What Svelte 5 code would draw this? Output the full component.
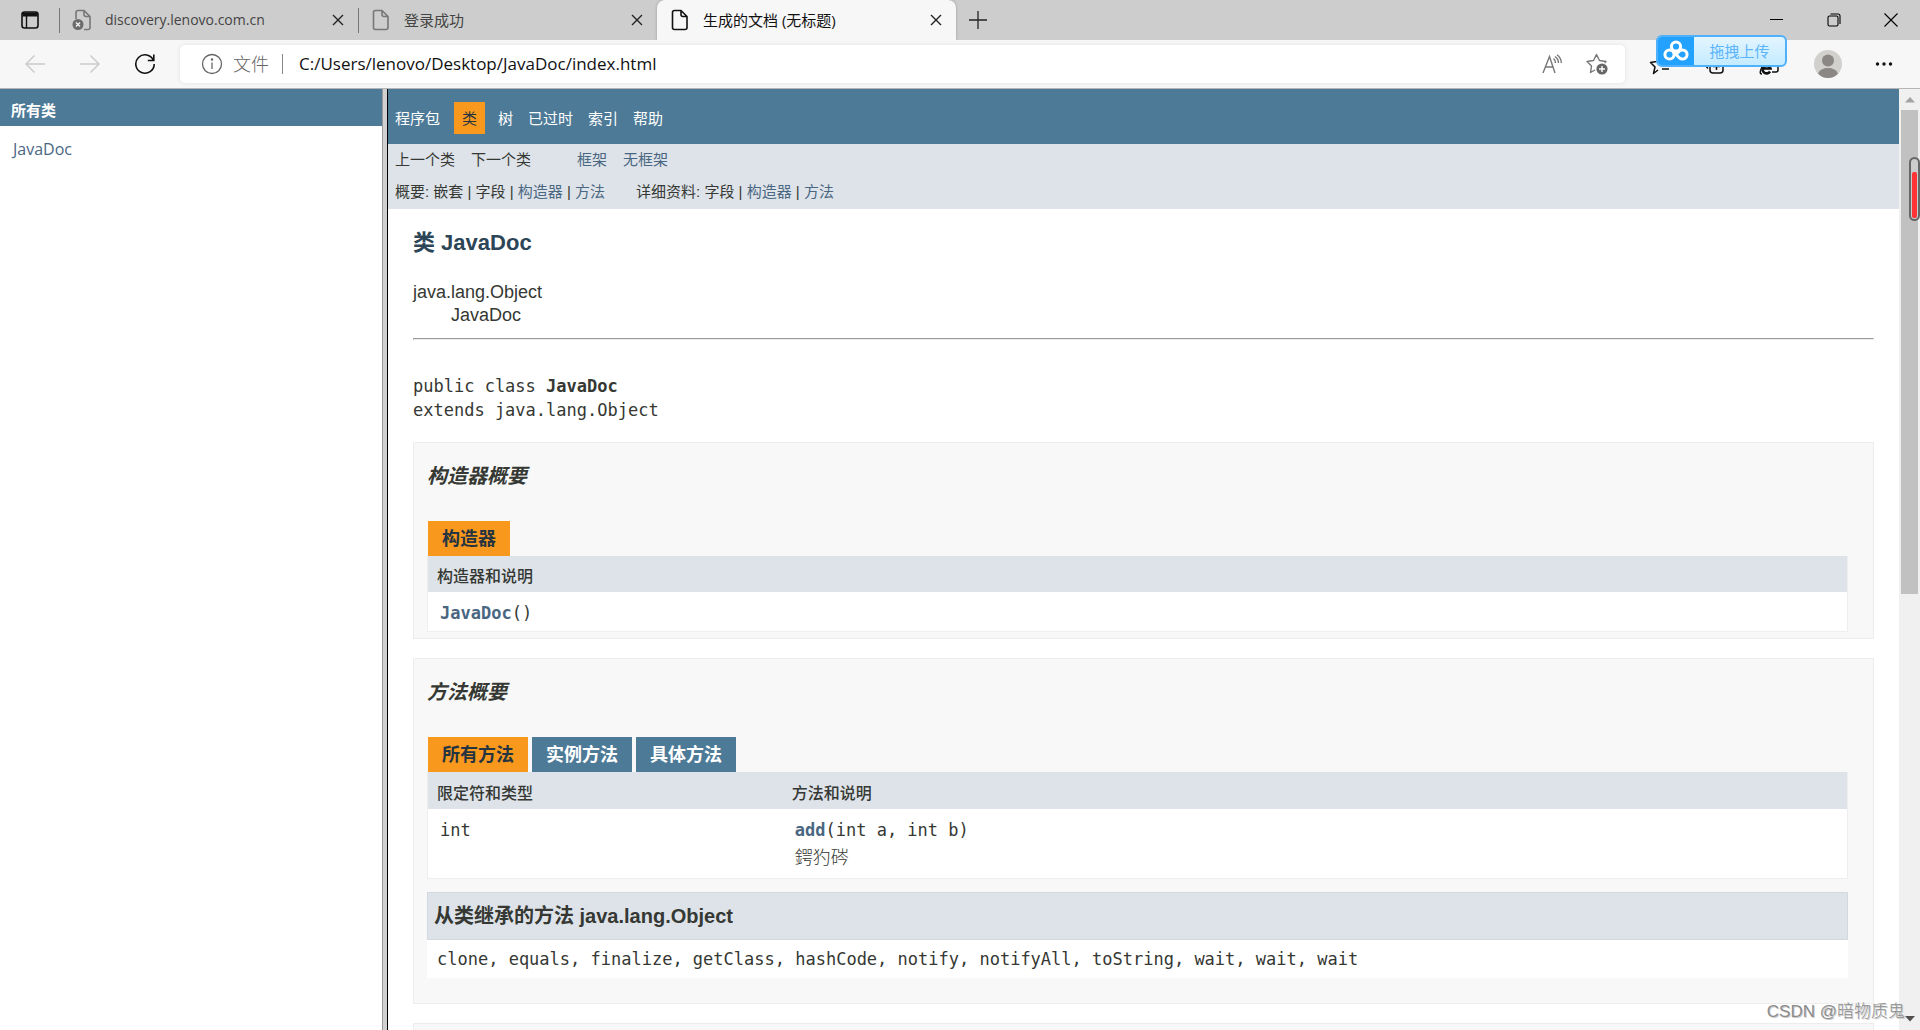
<script>
  const url = 'C:/Users/lenovo/Desktop/JavaDoc/index.html';
  const inherited = 'clone, equals, finalize, getClass, hashCode, notify, notifyAll, toString, wait, wait, wait';
  const methodTabs = ['所有方法', '实例方法', '具体方法'];
  let activeTab = $state(0);
</script>

{#snippet closeIcon()}
  <svg width="12" height="12" viewBox="0 0 12 12" stroke="#222" stroke-width="1.4" fill="none"><path d="M1 1l10 10M11 1l-10 10" /></svg>
{/snippet}

{#snippet pageIcon(color)}
  <svg class="page" width="20" height="22" viewBox="0 0 20 22" fill="none" stroke={color} stroke-width="1.6" stroke-linejoin="round">
    <path d="M4.500 1.500H11L17 7.500V18.500Q17 20.500 15 20.500H4.500Q2.500 20.500 2.500 18.500V3.500Q2.500 1.500 4.500 1.500zM11 1.500V5.500Q11 7.500 13 7.500H17" />
  </svg>
{/snippet}

<div class="window">
  <header class="tabs">
    <button class="menu" aria-label="标签页操作">
      <svg width="18" height="18" viewBox="0 0 18 18" fill="none" stroke="#111" stroke-width="1.6">
        <rect x="1" y="1" width="16" height="16" rx="2.500" /><path d="M1.500 3.500H16.500" stroke-width="4" /><path d="M5.500 4V17" stroke-width="1.400" />
      </svg>
    </button>
    <div class="tab first">
      <svg class="page" width="20" height="22" viewBox="0 0 20 22" fill="none" stroke="#777" stroke-width="1.600" stroke-linejoin="round">
        <path d="M4 10V3.500Q4 1.500 6 1.500H12L18 7.500V18.500Q18 20.500 16 20.500H12M12 1.500V5.500Q12 7.500 14 7.500H18" />
        <circle cx="6" cy="15.500" r="5.500" fill="#6b6b6b" stroke="none" /><path d="M4 13.500l4 4M8 13.500l-4 4" stroke="#eee" stroke-width="1.500" />
      </svg>
      <span class="name">discovery.lenovo.com.cn</span>
      <button aria-label="关闭">{@render closeIcon()}</button>
    </div>
    <div class="tab second">
      {@render pageIcon('#777')}
      <span class="name">登录成功</span>
      <button aria-label="关闭">{@render closeIcon()}</button>
    </div>
    <div class="tab active">
      {@render pageIcon('#111')}
      <span class="name">生成的文档 (无标题)</span>
      <button aria-label="关闭">{@render closeIcon()}</button>
    </div>
    <button class="plus" aria-label="新建标签页">
      <svg width="18" height="18" viewBox="0 0 18 18" stroke="#222" stroke-width="1.300"><path d="M9 0V18M0 9H18" /></svg>
    </button>
    <div class="controls">
      <button aria-label="最小化"><svg width="14" height="14" viewBox="0 0 14 14" stroke="#000"><path d="M0 6.500H13" /></svg></button>
      <button aria-label="还原"><svg width="14" height="14" viewBox="0 0 14 14" fill="none" stroke="#000" stroke-width="1.100"><rect x="1" y="3" width="10" height="10" rx="1.500" /><path d="M3.500 1H11Q13 1 13 3V11" /></svg></button>
      <button aria-label="关闭窗口"><svg width="14" height="14" viewBox="0 0 14 14" stroke="#000" stroke-width="1.100"><path d="M.5.5l13 13M13.500.5l-13 13" /></svg></button>
    </div>
  </header>

  <div class="toolbar">
    <div class="history">
      <button aria-label="后退"><svg width="20" height="20" viewBox="0 0 20 20" fill="none" stroke="#ccc" stroke-width="1.500"><path d="M20 10H1M9.500 1.500L1 10l8.500 8.500" /></svg></button>
      <button aria-label="前进"><svg width="20" height="20" viewBox="0 0 20 20" fill="none" stroke="#ccc" stroke-width="1.500"><path d="M0 10H19M10.500 1.500L19 10l-8.500 8.500" /></svg></button>
      <button aria-label="刷新"><svg width="22" height="22" viewBox="0 0 22 22" fill="none" stroke="#111" stroke-width="1.600"><path d="M19.500 7.500A9.200 9.200 0 1 0 20.200 11M19.800 1.500V7.500H13.800" /></svg></button>
    </div>
    <div class="address">
      <svg class="info" width="22" height="22" viewBox="0 0 22 22" fill="none" stroke="#666" stroke-width="1.300"><circle cx="11" cy="11" r="9.500" /><path d="M11 9.500V16" /><circle cx="11" cy="6.500" r=".6" fill="#666" /></svg>
      <label for="url">文件</label>
      <input id="url" type="text" value={url} />
      <button aria-label="大声朗读"><svg width="20" height="20" viewBox="0 0 20 20" fill="none" stroke="#777" stroke-width="1.400"><path d="M1 19L7.500 2.500L13 19M3 13H11M11.500 4.500Q13.500 6 13.500 9M13 2.500Q16.500 5 16.500 9M15 .8Q19.300 4 19.300 9" /></svg></button>
      <button aria-label="收藏"><svg width="22" height="22" viewBox="0 0 22 22" fill="none" stroke="#777" stroke-width="1.400" stroke-linejoin="round"><path d="M9 17L4.500 19.500L5.500 13L1 8.500L7.500 7.500L10.500 1.500L13.500 7.500L20 8.500L18.500 10" /><circle cx="16" cy="16" r="5.600" fill="#666" stroke="none" /><path d="M16 13V19M13 16H19" stroke="#fff" /></svg></button>
    </div>
    <div class="actions">
      <button aria-label="收藏夹"><svg width="22" height="22" viewBox="0 0 22 22" fill="none" stroke="#111" stroke-width="1.500" stroke-linejoin="round"><path d="M9 17L4.500 20.500L6 14L1.500 9.500L7.500 8.500L10 3L12.500 8.500L19 9.500M14 11H21M13 16H20" /></svg></button>
      <button aria-label="集锦"><svg width="22" height="22" viewBox="0 0 22 22" fill="none" stroke="#111" stroke-width="1.500"><rect x="6" y="7" width="13" height="13" rx="3" /><path d="M12.500 10V17M9 13.500H16M4 15.500Q1 13 2 8L4 3H14" /></svg></button>
      <button aria-label="IE 模式"><svg width="22" height="22" viewBox="0 0 22 22" fill="none" stroke="#111" stroke-width="1.500"><path d="M5 6V4Q5 2 7 2H17Q19 2 19 4V17Q19 19 17 19H13" /><path d="M11 18.500A4 4 0 1 1 11.500 15.500H4" stroke-width="2.600" /><path d="M3 21Q-.5 21 3 14" /></svg></button>
      <button aria-label="用户"><svg width="28" height="28" viewBox="0 0 28 28"><circle cx="14" cy="14" r="14" fill="#d2d0cd" /><circle cx="14" cy="10.500" r="6" fill="#8a8785" /><path d="M4 23.500Q6.500 18 14 18T24 23.500Q20 28 14 28T4 23.500z" fill="#8a8785" /></svg></button>
      <button aria-label="更多"><svg width="18" height="4" viewBox="0 0 18 4" fill="#111"><circle cx="2.500" cy="2" r="1.700" /><circle cx="9" cy="2" r="1.700" /><circle cx="15.500" cy="2" r="1.700" /></svg></button>
    </div>
    <button class="upload">
      <span class="cloud"><svg width="26" height="22" viewBox="0 0 26 22" fill="none" stroke="#fff" stroke-width="3"><circle cx="13" cy="6.500" r="4.600" /><circle cx="6.500" cy="14.500" r="4.600" /><path d="M10 11.500L16 17.500A4.600 4.600 0 1 0 16 11.500L13.500 14" /></svg></span>
      <span class="drag">拖拽上传</span>
    </button>
  </div>

  <div class="frames">
    <aside>
      <h1>所有类</h1>
      <a href="#javadoc">JavaDoc</a>
    </aside>
    <div class="splitter"></div>
    <main>
      <nav class="top">
        <a href="#package">程序包</a><a class="current" href="#class">类</a><a href="#tree">树</a><a href="#deprecated">已过时</a><a href="#index">索引</a><a href="#help">帮助</a>
      </nav>
      <div class="sub">
        <div class="line"><span>上一个类</span><span>下一个类</span><a class="frame" href="#frames">框架</a><a href="#noframes">无框架</a></div>
        <div class="line wide">
          <span>概要: 嵌套 | 字段 | <a href="#ctor">构造器</a> | <a href="#methods">方法</a></span>
          <span>详细资料: 字段 | <a href="#ctor">构造器</a> | <a href="#methods">方法</a></span>
        </div>
      </div>
      <article>
        <h2>类 JavaDoc</h2>
        <ul class="tree"><li>java.lang.Object<ul><li>JavaDoc</li></ul></li></ul>
        <hr />
        <pre>public class <b>JavaDoc</b>
extends java.lang.Object</pre>

        <section id="ctor">
          <h3>构造器概要</h3>
          <div class="captions"><span class="caption on">构造器</span></div>
          <table>
            <thead><tr><th>构造器和说明</th></tr></thead>
            <tbody><tr><td><code><a href="#ctor">JavaDoc</a>()</code></td></tr></tbody>
          </table>
        </section>

        <section id="methods" class="methods">
          <h3>方法概要</h3>
          <div class="captions">
            {#each methodTabs as name, i}
              <button class="caption" class:on={activeTab === i} onclick={() => (activeTab = i)}>{name}</button>
            {/each}
          </div>
          <table>
            <thead><tr><th class="type">限定符和类型</th><th>方法和说明</th></tr></thead>
            <tbody>
              <tr><td><code>int</code></td><td><code><a href="#add">add</a>(int a, int b)</code><div class="note">鍔犳硶</div></td></tr>
            </tbody>
          </table>
          <h4>从类继承的方法 java.lang.Object</h4>
          <code class="inherited">{inherited}</code>
        </section>

        <section></section>
      </article>
    </main>
    <div class="scrollbar">
      <svg width="10" height="6" viewBox="0 0 10 6" fill="#a3a3a3"><path d="M0 5.500L5 0l5 5.500z" /></svg>
      <div class="track"><div class="thumb"></div></div>
      <svg width="10" height="6" viewBox="0 0 10 6" fill="#505050"><path d="M0 0L5 5.500L10 0z" /></svg>
      <div class="gauge"><i></i></div>
    </div>
  </div>
  <div class="mark">CSDN @暗物质鬼</div>
</div>

<style>
  :global(body) { margin: 0; overflow: hidden; }
  * { box-sizing: border-box; }
  .window {
    position: relative; display: flex; flex-direction: column; height: 100vh; overflow: hidden;
    background: #fff; color: #353833; font: 15px/20px "Open Sans", "Noto Sans CJK SC", sans-serif;
  }
  button { border: 0; padding: 0; background: none; font: inherit; color: inherit; display: flex; align-items: center; justify-content: center; }
  svg { display: block; flex: none; }
  a { color: #4a6782; text-decoration: none; }

  .tabs { display: flex; height: 40px; flex: none; background: #cdcdcd; font-size: 14px; color: #444; }
  .menu { width: 59px; }
  .tab { display: flex; align-items: center; width: 299px; padding: 0 14px 0 13px; position: relative; }
  .tab .page { margin-right: 13px; }
  .tab .name { flex: 1; white-space: nowrap; }
  .tab.second .name, .tab.active .name { font-size: 15px; }
  .tab.first::before, .tab.second::before { content: ""; position: absolute; left: 0; top: 8px; width: 1px; height: 25px; background: #777; }
  .tab.active { background: #f7f7f7; color: #111; border-radius: 8px 8px 0 0; box-shadow: 0 0 3px #999; clip-path: inset(0 -4px 0 -4px); }
  .plus { width: 44px; }
  .controls { display: flex; margin-left: auto; padding-right: 1px; }
  .controls button { width: 57px; }

  .toolbar { position: relative; display: flex; align-items: center; height: 49px; flex: none; background: #f7f7f7; border-bottom: 1px solid #b5b5b5; }
  .history { display: flex; width: 180px; padding-left: 7px; }
  .history button { width: 55px; }
  .address { flex: 1; display: flex; align-items: center; height: 38px; padding: 0 17px 0 21px; background: #fff; border-radius: 5px; box-shadow: 0 0 4px #e2e2e2; font-size: 18px; }
  .address label { margin-left: 10px; padding-right: 13px; border-right: 1px solid #888; color: #666; font-size: 18px; font-weight: 300; line-height: 20px; }
  .address input { flex: 1; border: 0; outline: 0; padding: 0 0 0 16px; background: none; color: #111; font: 17px/24px "Open Sans", sans-serif; }
  .address button { margin-left: 24px; }
  .actions { display: flex; align-items: center; width: 295px; padding-left: 24px; gap: 33px; }
  .upload { position: absolute; right: 133px; top: -5px; width: 131px; height: 32px; border: 2px solid #4fb0fb; border-radius: 6px; background: linear-gradient(#e3f5ff, #c4ebff); overflow: hidden; color: #5cb5fb; }
  .cloud { display: flex; align-items: center; justify-content: center; width: 36px; height: 28px; background: #22a1fe; }
  .drag { flex: 1; font-size: 15px; }

  .frames { flex: 1; display: flex; min-height: 0; }
  aside { width: 382px; flex: none; font-size: 16px; }
  h1 { margin: 0 0 13px; padding: 7px 11px 2px; background: #4d7a97; color: #fff; font-size: 15px; line-height: 28px; }
  aside a { padding-left: 13px; }
  .splitter { width: 6px; flex: none; background: #d0d0d0; border-left: 1px solid #999; border-right: 1px solid #000; }
  main { flex: 1; min-width: 0; overflow: hidden; }
  .top { display: flex; align-items: center; height: 55px; background: #4d7a97; padding: 3px 0 0 7px; gap: 15px; }
  .top a { color: #fff; }
  .top .current { margin: 0 -2px 0 -1px; padding: 6px 8px 6px 8px; background: #f8981d; color: #253441; }
  .sub { height: 65px; background: #dee3e9; padding: 6px 7px; font-family: "Liberation Sans", "Noto Sans CJK SC", sans-serif; }
  .line { display: flex; gap: 16px; margin-bottom: 12px; white-space: nowrap; }
  .line.wide { gap: 31px; }
  .frame { margin-left: 30px; }

  article { padding: 19px 25px 0; font-family: "Liberation Sans", "Noto Sans CJK SC", sans-serif; }
  h2 { margin: 0 0 23px; color: #2c4557; font-size: 22px; line-height: 30px; }
  ul { list-style: none; margin: 0; padding: 0; }
  .tree { font-size: 18px; line-height: 23px; }
  .tree ul { padding-left: 38px; }
  hr { margin: 11px 0 34px; border: 1px solid; border-color: #999 #eee #eee #999; }
  pre, code { font-family: "DejaVu Sans Mono", monospace; font-size: 17px; }
  pre { margin: 0 0 20px; line-height: 24px; }
  section { margin-bottom: 19px; padding: 21px 25px 6px 13px; background: #f8f8f8; border: 1px solid #ededed; }
  .methods { padding-bottom: 25px; }
  h3 { margin: 0 0 33px; font-size: 20px; line-height: 24px; font-style: italic; }
  .captions { display: flex; gap: 4px; padding-left: 1px; }
  .caption { height: 35px; padding: 1px 14px 0; background: #4d7a97; color: #fff; font-size: 18px; font-weight: 700; line-height: 34px; }
  .caption.on { background: #f8981d; color: #253441; }
  table { width: 100%; border-collapse: separate; border-spacing: 0; border: 1px solid #eee; border-top: 0; background: #fff; }
  th { height: 36px; padding: 6px 9px 0; background: #dee3e9; text-align: left; font-size: 16px; line-height: 20px; font-weight: 500; }
  .methods th { height: 37px; }
  .type { width: 25%; }
  td { padding: 9px 12px 6px; vertical-align: top; line-height: 24px; }
  td code { display: block; }
  td code a { font-weight: 700; }
  .note { padding: 4px 0 2px; font-size: 18px; font-weight: 300; }
  h4 { margin: 13px 0 0; padding: 0 6px; background: #dee3e9; border: 1px solid #d0d9e0; font-size: 20px; line-height: 46px; }
  .inherited { display: block; padding: 0 10px; background: #fff; line-height: 38px; }

  .scrollbar { position: relative; width: 21px; flex: none; background: #f0f0f0; display: flex; flex-direction: column; align-items: center; padding: 8px 0; gap: 7px; }
  .track { flex: 1; width: 17px; }
  .thumb { height: 53.8%; background: #c1c1c1; }
  .gauge { position: absolute; right: 0; top: 68px; width: 11px; height: 64px; padding: 13px 1px 1px; border: 2px solid #666; border-radius: 6px; background: #ccc; }
  .gauge i { display: block; height: 46px; border-radius: 2px; background: #f33; }
  .mark { position: absolute; right: 15px; bottom: 6px; color: #8c8c8c; font: 300 17px/24px "Liberation Sans", "Noto Sans CJK SC", sans-serif; text-shadow: 1px 1px 0 #ccc; }
</style>
